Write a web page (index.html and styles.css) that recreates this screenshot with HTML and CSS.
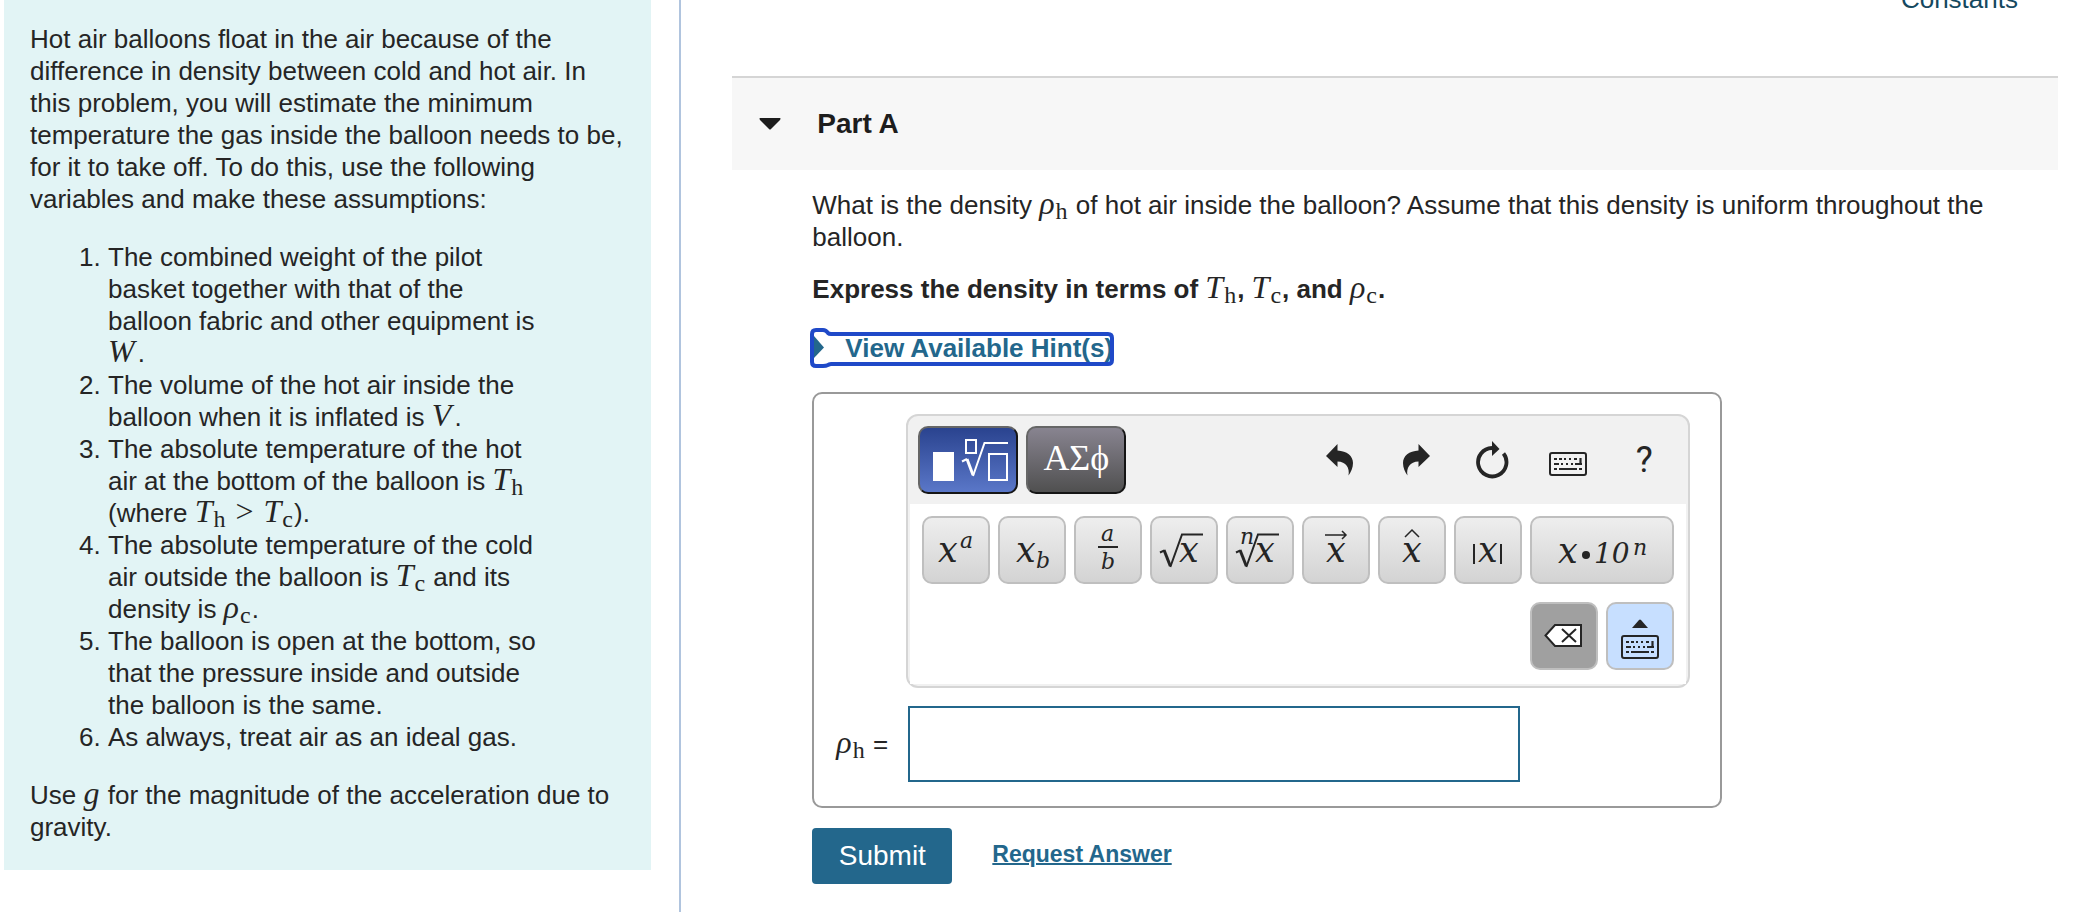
FILE: index.html
```
<!DOCTYPE html>
<html lang="en">
<head>
  <meta charset="UTF-8">
  <meta name="viewport" content="width=device-width, initial-scale=1.0">
  <title>Hot Air Balloon</title>
  <link rel="stylesheet" href="styles.css">
</head>
<body>
  <!-- shared icons -->
  <svg class="defs" aria-hidden="true">
    <symbol id="keyboard" viewBox="0 0 38 24">
      <rect x="1" y="1" width="36" height="22" rx="2" fill="none" stroke="currentColor" stroke-width="2"/>
      <path d="M5 7h3M10 7h3M15 7h2M20 7h2M25 7h3M5 12h5M12 12h2M17 12h2M22 12h2M26 12h7M31.500 6v7M5 17h3M10 17h18M30 17h3" fill="none" stroke="currentColor" stroke-width="2.200"/>
    </symbol>
    <symbol id="undo" viewBox="0 0 28 32">
      <path d="M0 12 11.500 0v6.500C21 7 27 12 27 19c0 5-2 9-4.500 12.500C24 24 20 17.500 11.500 17.500V23z" fill="currentColor"/>
    </symbol>
    <symbol id="radical" viewBox="0 0 64 64">
      <path d="M8 34.500l4.500-2.200" fill="none" stroke="currentColor" stroke-width="2"/>
      <path d="M12 32l6.300 16" fill="none" stroke="currentColor" stroke-width="3"/>
      <path d="M18.300 49 30 16.500H51" fill="none" stroke="currentColor" stroke-width="2"/>
    </symbol>
  </svg>

  <aside>
    <div class="intro">
      <p>Hot air balloons float in the air because of the difference in density between cold and hot air. In this problem, you will estimate the minimum temperature the gas inside the balloon needs to be, for it to take off. To do this, use the following variables and make these assumptions:</p>
      <ol>
        <li>The combined weight of the pilot basket together with that of the balloon fabric and other equipment is <span class="math">W</span>&hairsp;.</li>
        <li>The volume of the hot air inside the balloon when it is inflated is <span class="math">V</span>&hairsp;.</li>
        <li>The absolute temperature of the hot air at the bottom of the balloon is <span class="math">T<sub>h</sub></span> (where <span class="math">T<sub>h</sub> <b>&gt;</b> T<sub>c</sub></span>).</li>
        <li>The absolute temperature of the cold air outside the balloon is <span class="math">T<sub>c</sub></span> and its density is <span class="math">ρ<sub>c</sub></span>.</li>
        <li>The balloon is open at the bottom, so that the pressure inside and outside the balloon is the same.</li>
        <li>As always, treat air as an ideal gas.</li>
      </ol>
      <p>Use <span class="math">g</span> for the magnitude of the acceleration due to gravity.</p>
    </div>
  </aside>

  <main>
    <div class="links"><a href="#">Constants</a></div>
    <section>
      <header>
        <svg width="22" height="12" viewBox="0 0 22 12"><path d="M1 0h20q1 0 0 2l-9 9q-1 1-2 0L1 2Q0 0 1 0z" fill="#1d1d1d"/></svg>
        <h2>Part A</h2>
      </header>
      <div class="part">
        <p>What is the density <span class="math">ρ<sub>h</sub></span> of hot air inside the balloon? Assume that this density is uniform throughout the balloon.</p>
        <p class="bold">Express the density in terms of <span class="math">T<sub>h</sub></span>, <span class="math">T<sub>c</sub></span>, and <span class="math">ρ<sub>c</sub></span>.</p>
        <button class="hints">
          <svg width="304" height="40" viewBox="0 0 304 40">
            <path d="M4 8l10 11.500L4 30z" fill="#23678c"/>
            <path d="M6 2h7q3 0 5 3 1 1 3 1h277q4 0 4 4v22q0 4-4 4H21q-2 0-3 1-2 1-5 1H6q-4 0-4-4V6q0-4 4-4z" fill="none" stroke="#1f49c8" stroke-width="4"/>
          </svg>
          View Available Hint(s)
        </button>

        <div class="answer">
          <div class="palette">
            <div class="toolbar">
              <button class="tab blue" aria-label="Templates">
                <svg width="96" height="64" viewBox="0 0 96 64" fill="none" stroke="#fff" stroke-width="2">
                  <rect x="13" y="24" width="21" height="29" fill="#fff" stroke="none"/>
                  <rect x="46" y="12" width="10" height="13"/>
                  <path d="M42 33.500l5-2.500"/>
                  <path d="M47 31l6 16" stroke-width="3"/>
                  <path d="M53 48 64.500 15H88"/>
                  <rect x="69" y="26" width="18" height="26"/>
                </svg>
              </button>
              <button class="tab gray">ΑΣϕ</button>
              <span class="space"></span>
              <button class="tool" aria-label="Undo"><svg width="28" height="32"><use href="#undo"/></svg></button>
              <button class="tool" aria-label="Redo"><svg width="28" height="32" viewBox="0 0 28 32"><g transform="translate(28) scale(-1 1)"><use href="#undo" width="28" height="32"/></g></svg></button>
              <button class="tool" aria-label="Reset">
                <svg width="34" height="38" viewBox="0 0 34 38">
                  <path d="M28.500 12.500A14.200 14.200 0 1 1 17 7" fill="none" stroke="currentColor" stroke-width="3.800"/>
                  <path d="M17 0l7.500 8L17 15z" fill="currentColor"/>
                </svg>
              </button>
              <button class="tool low" aria-label="Keyboard shortcuts"><svg width="38" height="24"><use href="#keyboard"/></svg></button>
              <button class="tool help">?</button>
            </div>
            <div class="keys">
              <button aria-label="Superscript"><svg viewBox="0 0 64 64"><text x="14" y="44" class="x">x</text><text x="36" y="30" class="s">a</text></svg></button>
              <button aria-label="Subscript"><svg viewBox="0 0 64 64"><text x="16" y="44" class="x">x</text><text x="36" y="50" class="s">b</text></svg></button>
              <button aria-label="Fraction"><svg viewBox="0 0 64 64"><text x="25" y="23" class="s">a</text><path d="M22 29h20" stroke="currentColor" stroke-width="2"/><text x="25" y="51" class="s">b</text></svg></button>
              <button aria-label="Square root"><svg viewBox="0 0 64 64"><use href="#radical"/><text x="27" y="44" class="x">x</text></svg></button>
              <button aria-label="Nth root"><svg viewBox="0 0 64 64"><use href="#radical"/><text x="27" y="44" class="x">x</text><text x="12" y="26" class="s">n</text></svg></button>
              <button aria-label="Vector"><svg viewBox="0 0 64 64"><path d="M21 17h21M38 13l4 4-4 4" fill="none" stroke="currentColor" stroke-width="1.500"/><text x="22" y="44" class="x">x</text></svg></button>
              <button aria-label="Unit vector"><svg viewBox="0 0 64 64"><path d="M25 19l7-7 7 7" fill="none" stroke="currentColor" stroke-width="1.500"/><text x="22" y="44" class="x">x</text></svg></button>
              <button aria-label="Absolute value"><svg viewBox="0 0 64 64"><path d="M18 26v20M45 26v20" stroke="currentColor" stroke-width="2"/><text x="22" y="44" class="x">x</text></svg></button>
              <button class="wide" aria-label="Scientific notation"><svg viewBox="0 0 140 64"><text x="26" y="45" class="x">x</text><circle cx="54" cy="37" r="4" fill="currentColor"/><text x="62" y="45" class="n">10</text><text x="101" y="37" class="s">n</text></svg></button>
              <button class="delete" aria-label="Delete">
                <svg viewBox="0 0 64 64"><path d="M13.500 31.500 23 21h26v21H23z" fill="#fff" stroke="currentColor" stroke-width="2"/><path d="M30 25l14 13M44 25 30 38" stroke="currentColor" stroke-width="2"/></svg>
              </button>
              <button class="toggle" aria-label="Hide keyboard">
                <svg viewBox="0 0 64 64"><path d="M24 24l7-8q1-1 2 0l7 8z" fill="currentColor"/><use href="#keyboard" x="13" y="31" width="38" height="24"/></svg>
              </button>
            </div>
          </div>
          <label for="density"><span class="math">ρ<sub>h</sub></span> =</label>
          <input type="text" id="density" autocomplete="off">
        </div>

        <div class="actions">
          <button class="submit">Submit</button>
          <a href="#">Request Answer</a>
        </div>
      </div>
    </section>
  </main>
</body>
</html>
```
FILE: styles.css
```
* {
  margin: 0;
  padding: 0;
  box-sizing: border-box;
}
body {
  display: flex;
  min-height: 100vh;
  overflow: hidden;
  font-family: "Liberation Sans", Arial, sans-serif;
  font-size: 26px;
  line-height: 32px;
  color: #252525;
  background-color: #fff;
}
button, input {
  font-family: inherit;
  font-size: inherit;
  color: inherit;
}
button {cursor: pointer;}
svg {display: block;}
.defs {
  position: absolute;
  width: 0;
  height: 0;
}

/* left pane */
aside {
  width: 32.6%;
  flex-shrink: 0;
  padding: 0 28px 0 4px;
  border-right: 2px solid #b0c4de;
}
.intro {
  padding: 23px 26px 27px;
  background-color: #e2f4f5;
}
ol {
  margin: 26px 78px;
}
.math {
  padding-right: 1px;
  font-family: "Liberation Serif", serif;
  font-style: italic;
  font-weight: 400;
  font-size: 32px;
  line-height: 0;
}
.math sub {
  padding-left: 1px;
  font-style: normal;
  font-size: 24px;
  line-height: 0;
  vertical-align: -5px;
}
.math b {
  padding: 0 2px;
  font-style: normal;
  font-weight: 400;
}

/* right pane */
main {
  flex: 1;
  padding: 0 32px 0 51px;
}
.links {
  margin: -17px 40px 61px;
  text-align: right;
}
.links a {
  color: #15495f;
  text-decoration: none;
}
header {
  display: flex;
  align-items: center;
  gap: 36px;
  height: 94px;
  padding-left: 27px;
  background-color: #f7f7f7;
  border-top: 2px solid #d5d5d5;
}
h2 {
  font-size: 28px;
  color: #1d1d1d;
}
.part {
  padding: 19px 0 0 80px;
}
.bold {
  margin-top: 20px;
  font-weight: 700;
}
.hints {
  display: block;
  position: relative;
  width: 304px;
  height: 40px;
  margin: 23px 0 24px -2px;
  padding-left: 35px;
  border: none;
  background: none;
  color: #23678c;
  font-weight: 700;
  text-align: left;
  white-space: nowrap;
}
.hints svg {
  position: absolute;
  left: 0;
  top: 0;
}

/* answer box */
.answer {
  display: grid;
  grid-template-columns: 70px 1fr;
  row-gap: 18px;
  align-items: center;
  max-width: 910px;
  padding: 20px 30px 24px 22px;
  border: 2px solid #999;
  border-radius: 10px;
}
.palette {
  grid-column: 2;
  border: 2px solid #d5d5d5;
  border-radius: 12px;
  background-color: #f1f1f1;
}
.toolbar {
  display: flex;
  gap: 8px;
  padding: 10px;
}
.space {flex: 1;}
.tab {
  width: 100px;
  height: 68px;
  border: 2px solid;
  border-color: #666 #151515 #151515 #666;
  border-radius: 10px;
  color: #fff;
}
.blue {background: linear-gradient(#2a438f, #5a77c8);}
.gray {
  padding-bottom: 4px;
  background: linear-gradient(#888490, #505050);
  font-family: "Liberation Serif", serif;
  font-size: 36px;
}
.tool {
  display: flex;
  align-items: center;
  justify-content: center;
  width: 68px;
  height: 68px;
  border: none;
  background: none;
}
.low {padding-top: 8px;}
.help {
  font-family: Roboto, sans-serif;
  font-size: 36px;
}
.keys {
  display: flex;
  flex-wrap: wrap;
  justify-content: flex-end;
  gap: 18px 8px;
  margin: 0 2px 2px;
  padding: 12px 12px 14px;
  background-color: #fff;
}
.keys button {
  width: 68px;
  height: 68px;
  border: 2px solid #bfbfbf;
  border-radius: 10px;
  background: linear-gradient(#eee, #d3d3d3);
}
.keys .wide {width: 144px;}
.keys .delete {background: #a0a0a0;}
.keys .toggle {background: #c7dfff;}
.keys text {
  font-family: "DejaVu Serif", serif;
  font-style: italic;
  fill: currentColor;
}
.x {font-size: 35px;}
.n {font-size: 28px;}
.s {font-size: 22px;}
.answer input {
  width: 612px;
  max-width: 100%;
  height: 76px;
  margin-left: 2px;
  padding: 0 12px;
  border: 2px solid #23678c;
  outline: none;
}

.actions {
  display: flex;
  align-items: center;
  gap: 40px;
  margin-top: 20px;
}
.submit {
  width: 140px;
  height: 56px;
  border: none;
  border-radius: 4px;
  background-color: #23678c;
  color: #fff;
  font-size: 28px;
}
.actions a {
  padding-bottom: 4px;
  color: #23678c;
  font-size: 23px;
  font-weight: 700;
  text-decoration-thickness: 2px;
}
```
